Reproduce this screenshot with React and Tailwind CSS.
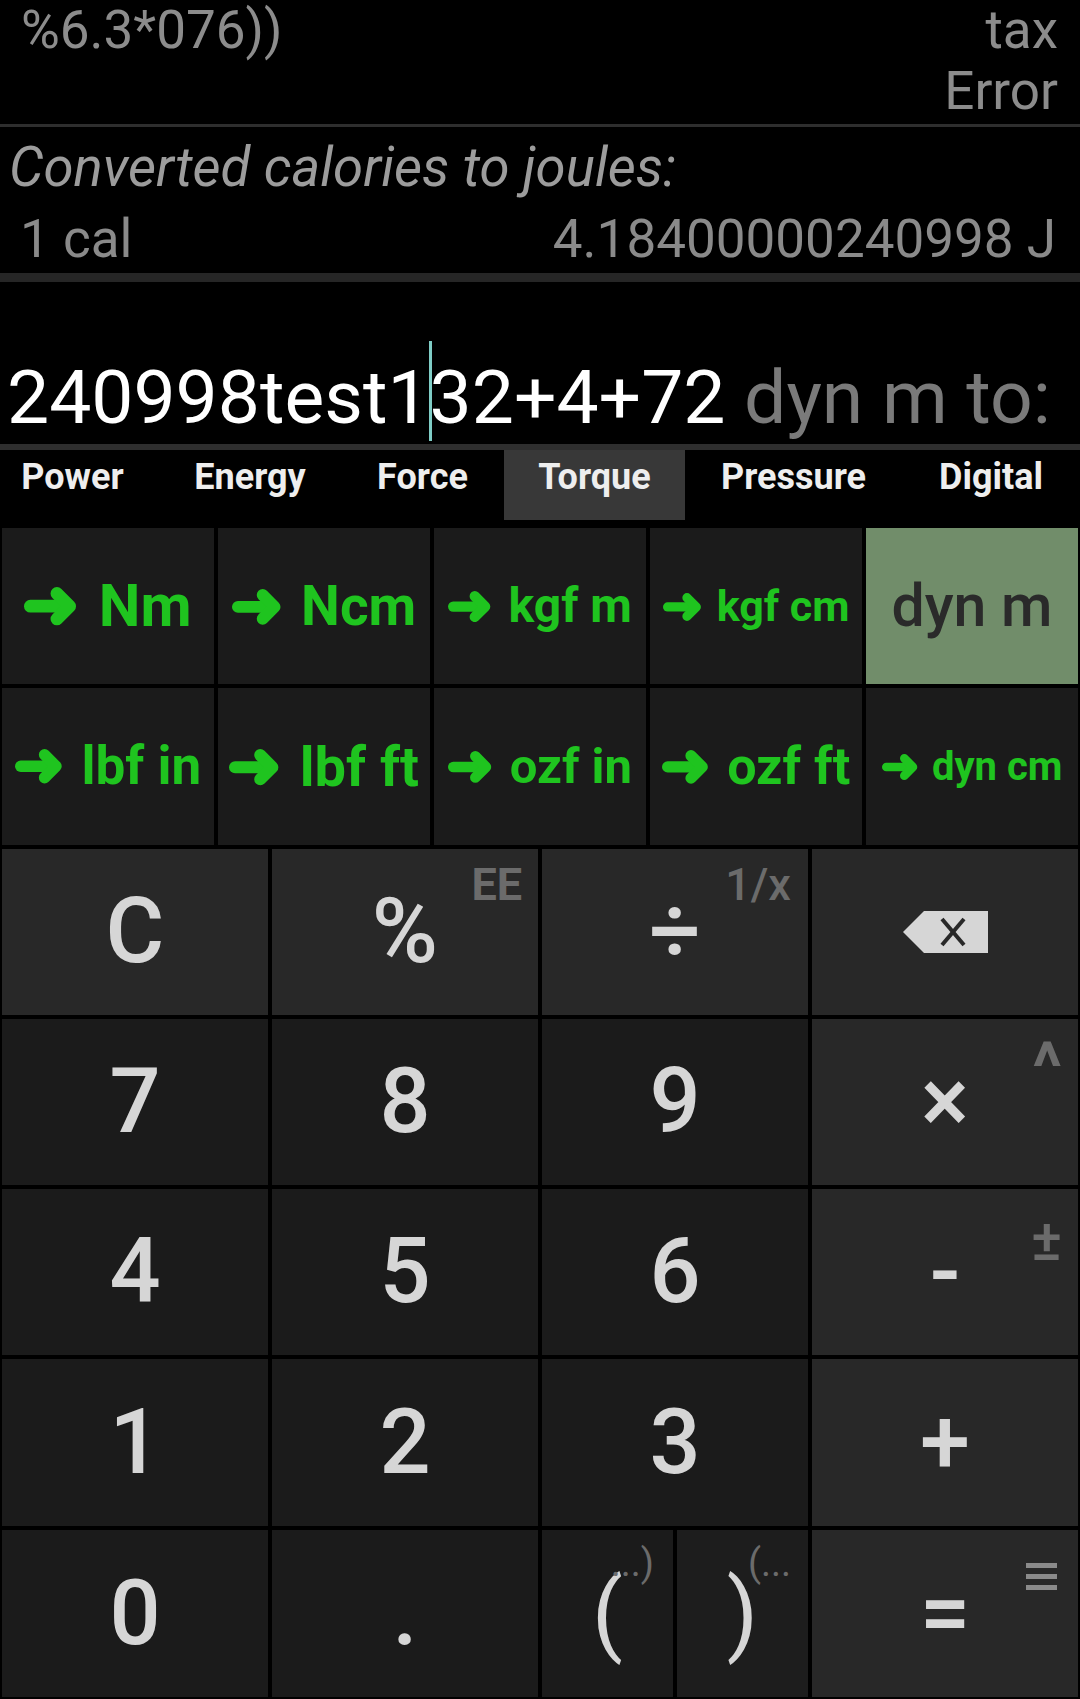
import React from "react";

// heavy round-tipped arrow shown before each target unit
const Arrow = () => (
  <svg viewBox="0 0 50 36" className="inline-block align-baseline mr-[0.36em]" style={{ width: "0.9em", height: "0.65em" }}>
    <g stroke="#1fc41f" strokeWidth="12" strokeLinecap="round" strokeLinejoin="round" fill="none">
      <line x1="6" y1="18" x2="40" y2="18" />
      <polyline points="31,6 43,18 31,30" />
    </g>
  </svg>
);

const units = [
  { t: "Nm", cls: "text-[59px]" },
  { t: "Ncm", cls: "text-[55px]" },
  { t: "kgf m", cls: "text-[48px]" },
  { t: "kgf cm", cls: "text-[43px]" },
  { t: "dyn m", cls: "text-[59px]", sel: true },
  { t: "lbf in", cls: "text-[53px]" },
  { t: "lbf ft", cls: "text-[56px]" },
  { t: "ozf in", cls: "text-[49px]" },
  { t: "ozf ft", cls: "text-[52px]" },
  { t: "dyn cm", cls: "text-[40px]" },
];

const tabs = [
  { t: "Power", w: "w-[173px]" },
  { t: "Energy", w: "w-[182px]" },
  { t: "Force", w: "w-[163px]" },
  { t: "Torque", w: "w-[181px]", active: true },
  { t: "Pressure", w: "w-[217px]" },
  { t: "Digital", w: "w-[178px]" },
];

const Key = ({ dark, children, sup, supCls = "top-[13px] right-[16px] text-[45px] font-bold" }) => (
  <div className={`relative flex items-center justify-center text-[90px] leading-none font-medium text-[#d6d6d6] ${dark ? "bg-[#1b1b1b]" : "bg-[#282828]"}`}>
    {children}
    {sup && <span className={`absolute leading-none text-[#6b6b6b] ${supCls}`}>{sup}</span>}
  </div>
);

export default function App() {
  return (
    <div className="w-[1080px] h-[1699px] bg-black overflow-hidden font-['Roboto',sans-serif]">
      {/* history */}
      <div className="h-[124px] pl-[21px] pr-[22px] text-[53px] leading-[61px] text-[#8c8c8c]">
        <div className="flex justify-between">
          <span>%6.3*076))</span>
          <span>tax</span>
        </div>
        <div className="text-right">Error</div>
      </div>
      <div className="h-[3px] bg-[#2e2e2e]" />

      {/* last conversion */}
      <div className="h-[146px] pt-[10px] leading-[61px]">
        <div className="italic pl-[9px] text-[54.5px] text-[#9c9c9c]">Converted calories to joules:</div>
        <div className="flex justify-between mt-[11px] pl-[20px] pr-[24px] text-[53px] text-[#8a8a8a]">
          <span>1 cal</span>
          <span>4.18400000240998 J</span>
        </div>
      </div>
      <div className="h-[9px] bg-[#262626]" />

      {/* input */}
      <div className="h-[162px] flex items-end pl-[7px] pb-[2px]">
        <div className="text-[75px] leading-[90px] text-white whitespace-nowrap">
          240998test1
          <span className="relative">
            <span className="absolute left-[-1px] top-[-12px] w-[3px] h-[100px] bg-[#7fcdc6]" />
          </span>
          32+4+72<span className="text-[#7a7a7a]"> dyn m to:</span>
        </div>
      </div>
      <div className="h-[6px] bg-[#2e2e2e]" />

      {/* category tabs */}
      <div className="h-[70px] flex -ml-[14px]">
        {tabs.map((tab) => (
          <div
            key={tab.t}
            className={`${tab.w} shrink-0 text-center pt-[6px] text-[36px] leading-[42px] font-bold text-[#eeeeee] whitespace-nowrap ${tab.active ? "bg-[#383838]" : ""}`}
          >
            {tab.t}
          </div>
        ))}
      </div>
      <div className="h-[8px]" />

      {/* target units */}
      <div className="h-[317px] grid grid-cols-5 grid-rows-[156px_157px] gap-[4px] px-[2px]">
        {units.map((u) =>
          u.sel ? (
            <div key={u.t} className={`flex items-center justify-center bg-[#718d6a] font-medium text-[#2a2a2a] ${u.cls}`}>
              {u.t}
            </div>
          ) : (
            <div key={u.t} className={`flex items-center justify-center bg-[#1b1b1b] font-bold text-[#1fc41f] whitespace-nowrap ${u.cls}`}>
              <span>
                <Arrow />
                {u.t}
              </span>
            </div>
          )
        )}
      </div>
      <div className="h-[4px]" />

      {/* keypad */}
      <div className="h-[848px] grid grid-cols-4 grid-rows-[166px_166px_166px_167px_167px] gap-[4px] px-[2px]">
        <Key>C</Key>
        <Key sup="EE">%</Key>
        <Key sup="1/x" supCls="top-[13px] right-[17px] text-[45px]">÷</Key>
        <Key>
          <svg viewBox="0 0 85 42" className="w-[85px] h-[42px]">
            <polygon points="0,21 21,0 85,0 85,42 21,42" fill="#d6d6d6" />
            <g stroke="#282828" strokeWidth="4">
              <line x1="39" y1="8" x2="61" y2="34" />
              <line x1="61" y1="8" x2="39" y2="34" />
            </g>
          </svg>
        </Key>

        <Key dark>7</Key>
        <Key dark>8</Key>
        <Key dark>9</Key>
        <Key sup="^" supCls="top-[14px] right-[16px] text-[68px] font-bold">×</Key>

        <Key dark>4</Key>
        <Key dark>5</Key>
        <Key dark>6</Key>
        <Key sup="±" supCls="top-[22px] right-[16px] text-[58px] font-medium">-</Key>

        <Key dark>1</Key>
        <Key dark>2</Key>
        <Key dark>3</Key>
        <Key>+</Key>

        <Key dark>0</Key>
        <Key dark>.</Key>
        <div className="grid grid-cols-2 gap-[4px]">
          <div className="relative flex items-center justify-center bg-[#1b1b1b] text-[90px] leading-none text-[#d6d6d6]">
            (
            <span className="absolute top-[14px] right-[19px] text-[38px] leading-none text-[#6b6b6b]">...)</span>
          </div>
          <div className="relative flex items-center justify-center bg-[#1d1d1d] text-[90px] leading-none text-[#d6d6d6]">
            )
            <span className="absolute top-[14px] right-[17px] text-[38px] leading-none text-[#6b6b6b]">(...</span>
          </div>
        </div>
        <div className="relative flex items-center justify-center bg-[#282828] text-[90px] leading-none font-medium text-[#d6d6d6]">
          =
          <svg viewBox="0 0 31 27" className="absolute top-[33px] right-[21px] w-[31px] h-[27px]">
            <rect x="0" y="0" width="31" height="5" fill="#8a8a8a" />
            <rect x="0" y="11" width="31" height="5" fill="#8a8a8a" />
            <rect x="0" y="22" width="31" height="5" fill="#8a8a8a" />
          </svg>
        </div>
      </div>
    </div>
  );
}
